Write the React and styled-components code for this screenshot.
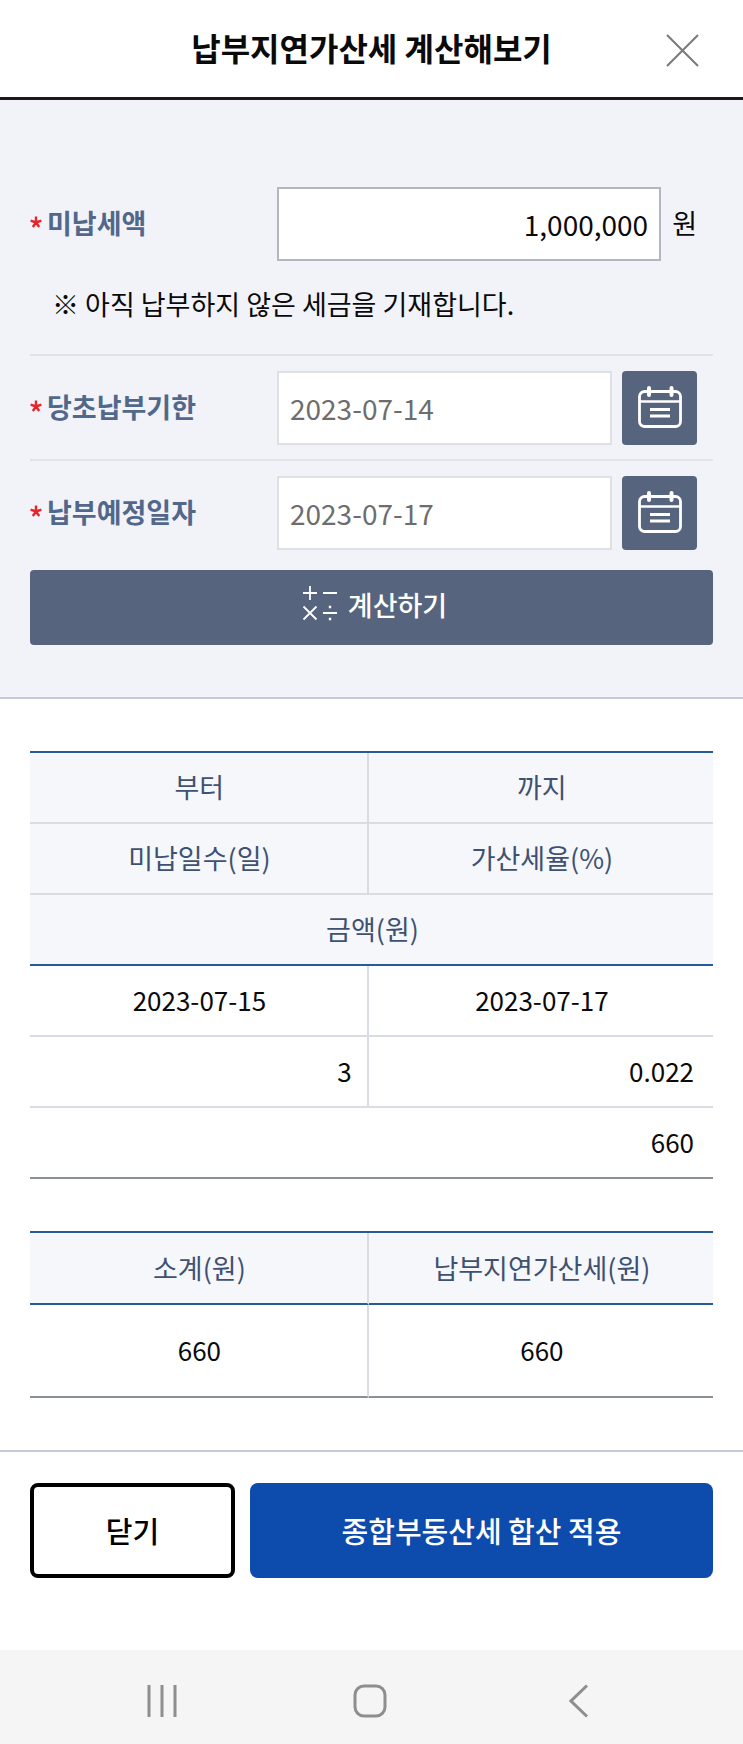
import React from "react";
import styled, { createGlobalStyle } from "styled-components";

const GlobalStyle = createGlobalStyle`
  * { box-sizing: border-box; }
  body {
    margin: 0;
    background: #fff;
    color: #0a0a0a;
    font-family: "Noto Sans CJK KR", "Noto Sans", sans-serif;
    font-size: 27px;
    line-height: 38px;
  }
  button, input { font: inherit; margin: 0; }
  button { cursor: pointer; padding: 0; border: 0; }
`;

const Page = styled.div`
  min-height: 100vh;
  display: flex;
  flex-direction: column;
`;

const Header = styled.header`
  display: grid;
  grid-template-columns: 60px 1fr 60px;
  align-items: center;
  height: 100px;
  padding: 0 30px;
  border-bottom: 3px solid #1c1a1d;
`;

const Title = styled.h1`
  grid-column: 2;
  margin: 0;
  padding-bottom: 3px;
  text-align: center;
  font-size: 32px;
  line-height: 48px;
  font-weight: 700;
`;

const CloseIconButton = styled.button`
  display: flex;
  align-items: center;
  justify-content: center;
  height: 60px;
  padding-top: 4px;
  background: none;
  color: #77797d;
`;

const FormSection = styled.form`
  padding: 72px 30px 52px;
  background: #f2f3f9;
  border-bottom: 2px solid #c3cad8;
`;

const Row = styled.div`
  display: flex;
  align-items: center;
  padding: 15px 16px 14px 0;
  border-top: ${(p) => (p.$divided ? "2px solid #e1e3ea" : "0")};
`;

const Label = styled.label`
  flex: 0 0 247px;
  display: flex;
  align-items: center;
  gap: 5px;
  padding-bottom: 3px;
  color: #52688b;
  font-weight: 700;
`;

const Field = styled.input`
  flex: 1;
  min-width: 0;
  height: 74px;
  padding: 0 11px;
  border: 2px solid ${(p) => (p.$editable ? "#b2b6c1" : "#dfe0e4")};
  border-radius: 0;
  background: #fff;
  color: ${(p) => (p.$editable ? "#0a0a0a" : "#6d6d6d")};
  font-size: 28px;
  text-align: ${(p) => (p.$editable ? "right" : "left")};
`;

const Unit = styled.span`
  margin-left: 11px;
  padding-bottom: 3px;
`;

const DateButton = styled.button`
  display: flex;
  align-items: center;
  justify-content: center;
  width: 75px;
  height: 74px;
  margin-left: 10px;
  border-radius: 4px;
  background: #56647d;
  color: #fff;
`;

const Note = styled.p`
  margin: 0;
  padding: 10px 22px 31px;
`;

const CalcButton = styled.button`
  display: flex;
  align-items: center;
  justify-content: center;
  gap: 10px;
  width: 100%;
  height: 75px;
  padding: 0 0 6px 6px;
  margin-top: 6px;
  border-radius: 4px;
  background: #56647d;
  color: #fff;
  font-weight: 500;
`;

const Results = styled.main`
  display: flex;
  flex-direction: column;
  gap: 52px;
  padding: 52px 30px;
`;

const Table = styled.table`
  width: 100%;
  table-layout: fixed;
  border-collapse: separate;
  border-spacing: 0;
  border-top: 2px solid #265b98;

  th, td {
    padding: 0 16px 1px 18px;
    border-bottom: 2px solid #d9dde3;
    border-right: 2px solid #d9dde3;
    text-align: center;
    font-weight: 400;
  }
  th:last-child, td:last-child { border-right: 0; }
  th {
    height: ${(p) => (p.$summary ? 72 : 71)}px;
    background: #f5f7fb;
    color: #3f5172;
  }
  td {
    height: ${(p) => (p.$summary ? 93 : 71)}px;
    font-size: 26px;
  }
  thead tr:last-child th { border-bottom-color: #265b98; }
  tbody tr:last-child td { border-bottom-color: #8b9096; }
`;

const LeftCol = styled.col`
  width: 49.6%;
`;

const NumberCell = styled.td`
  && { text-align: right; padding-right: ${(p) => (p.$inner ? 15 : 19)}px; }
`;

const Footer = styled.footer`
  display: flex;
  gap: 15px;
  padding: 31px 30px 72px;
  border-top: 2px solid #c3cad8;
`;

const FooterButton = styled.button`
  flex: ${(p) => (p.$primary ? "1 1 0" : "0 0 30%")};
  height: 95px;
  padding-bottom: 2px;
  border: ${(p) => (p.$primary ? "0" : "4px solid #000")};
  border-radius: 8px;
  background: ${(p) => (p.$primary ? "#0d4cad" : "#fff")};
  color: ${(p) => (p.$primary ? "#fff" : "#000")};
  font-size: 29px;
  font-weight: 500;
`;

const NavBar = styled.nav`
  display: grid;
  grid-template-columns: repeat(3, 1fr);
  justify-items: center;
  width: 100%;
  height: 94px;
  margin-top: auto;
  padding: 7px 60px 0 58px;
  background: #f5f5f5;
`;

const NavButton = styled.button`
  display: flex;
  align-items: center;
  justify-content: center;
  width: 80px;
  background: none;
  color: #8e8e8e;
`;

const Star = () => (
  <svg width="12" height="14" viewBox="0 0 12 14" stroke="#e8242b" strokeWidth="2.4" aria-hidden="true">
    <path d="M6 6.5V.5M6 6.5L.6 4.7M6 6.5L11.4 4.7M6 6.5L2.8 11M6 6.5L9.2 11" />
  </svg>
);

const CalendarIcon = () => (
  <svg width="46" height="44" viewBox="0 0 46 44" fill="none" stroke="currentColor" aria-hidden="true">
    <rect x="2.5" y="5.5" width="41" height="35" rx="5" strokeWidth="2.8" />
    <path d="M2.5 15.5H43.5" strokeWidth="2.4" />
    <path d="M12 2V9M34.5 2V9" strokeWidth="4" strokeLinecap="round" />
    <path d="M13 23.5H33M13 30H33" strokeWidth="2.8" />
  </svg>
);

const CalcIcon = () => (
  <svg width="36" height="40" viewBox="0 0 36 40" fill="none" stroke="currentColor" strokeWidth="1.8" aria-hidden="true">
    <path d="M8 1V15M1 8H15M21 8H35M1.5 21.5L14.5 34.5M14.5 21.5L1.5 34.5M21 28H35" />
    <path d="M28 20.8V23.2M28 32.8V35.2" strokeWidth="2.4" />
  </svg>
);

function DateRow({ id, label, value }) {
  return (
    <Row $divided>
      <Label htmlFor={id}><Star />{label}</Label>
      <Field id={id} type="text" readOnly value={value} />
      <DateButton type="button" aria-label={label + " 선택"}><CalendarIcon /></DateButton>
    </Row>
  );
}

export default function App() {
  return (
    <Page>
      <GlobalStyle />
      <Header>
        <Title>납부지연가산세 계산해보기</Title>
        <CloseIconButton type="button" aria-label="창 닫기">
          <svg width="34" height="34" viewBox="0 0 34 34" stroke="currentColor" strokeWidth="2" aria-hidden="true">
            <path d="M1 1L32 32M32 1L1 32" />
          </svg>
        </CloseIconButton>
      </Header>

      <FormSection onSubmit={(e) => e.preventDefault()}>
        <Row>
          <Label htmlFor="amount"><Star />미납세액</Label>
          <Field id="amount" type="text" inputMode="numeric" defaultValue="1,000,000" $editable />
          <Unit>원</Unit>
        </Row>
        <Note>※ 아직 납부하지 않은 세금을 기재합니다.</Note>
        <DateRow id="due" label="당초납부기한" value="2023-07-14" />
        <DateRow id="planned" label="납부예정일자" value="2023-07-17" />
        <CalcButton type="submit"><CalcIcon />계산하기</CalcButton>
      </FormSection>

      <Results>
        <Table>
          <colgroup><LeftCol /><col /></colgroup>
          <thead>
            <tr><th>부터</th><th>까지</th></tr>
            <tr><th>미납일수(일)</th><th>가산세율(%)</th></tr>
            <tr><th colSpan={2}>금액(원)</th></tr>
          </thead>
          <tbody>
            <tr><td>2023-07-15</td><td>2023-07-17</td></tr>
            <tr><NumberCell $inner>3</NumberCell><NumberCell>0.022</NumberCell></tr>
            <tr><NumberCell colSpan={2}>660</NumberCell></tr>
          </tbody>
        </Table>
        <Table $summary>
          <colgroup><LeftCol /><col /></colgroup>
          <thead>
            <tr><th>소계(원)</th><th>납부지연가산세(원)</th></tr>
          </thead>
          <tbody>
            <tr><td>660</td><td>660</td></tr>
          </tbody>
        </Table>
      </Results>

      <Footer>
        <FooterButton type="button">닫기</FooterButton>
        <FooterButton type="button" $primary>종합부동산세 합산 적용</FooterButton>
      </Footer>

      <NavBar>
        <NavButton type="button" aria-label="최근 앱">
          <svg width="32" height="34" viewBox="0 0 32 34" stroke="currentColor" strokeWidth="3" aria-hidden="true">
            <path d="M3 1V33M16 1V33M29 1V33" />
          </svg>
        </NavButton>
        <NavButton type="button" aria-label="홈">
          <svg width="34" height="34" viewBox="0 0 34 34" fill="none" stroke="currentColor" strokeWidth="3" aria-hidden="true">
            <rect x="2" y="2" width="30" height="30" rx="9" />
          </svg>
        </NavButton>
        <NavButton type="button" aria-label="뒤로">
          <svg width="20" height="34" viewBox="0 0 20 34" fill="none" stroke="currentColor" strokeWidth="3" aria-hidden="true">
            <path d="M18 1.5L2 17L18 32.5" />
          </svg>
        </NavButton>
      </NavBar>
    </Page>
  );
}
